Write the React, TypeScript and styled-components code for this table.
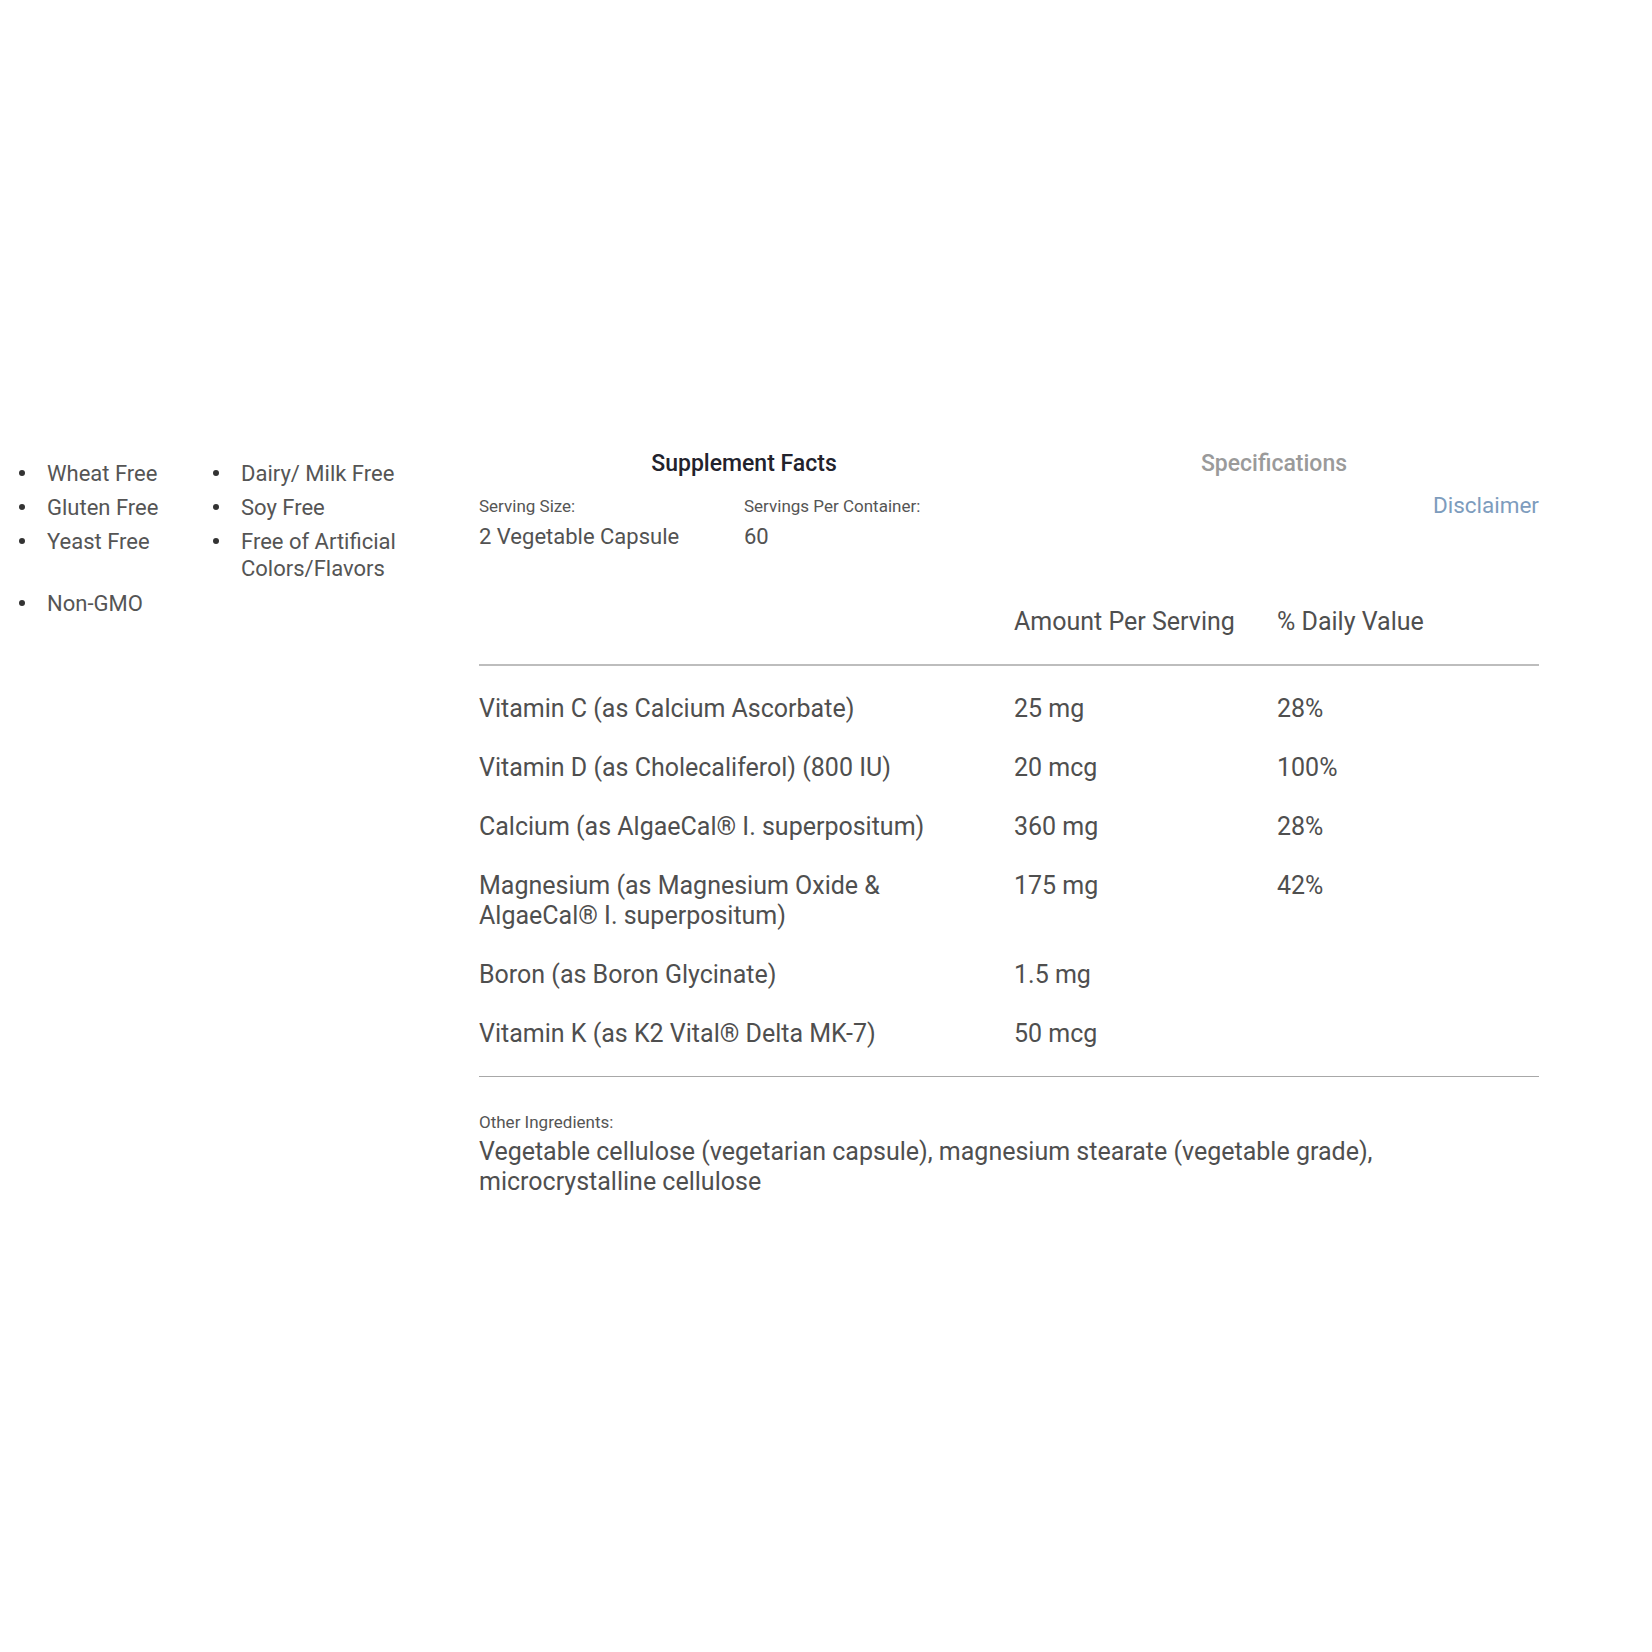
import React from "react";
import styled, { createGlobalStyle } from "styled-components";

const GlobalStyle = createGlobalStyle`
  html, body { margin: 0; padding: 0; background: #ffffff; }
  body { font-family: Roboto, "Noto Sans", "Liberation Sans", sans-serif; color: #4f4f4f; }
  * { box-sizing: border-box; }
`;

const Page = styled.div`
  width: 1652px;
  min-height: 1652px;
  display: flex;
  align-items: flex-start;
  padding-top: 449px;
`;

const FeaturePanel = styled.div`
  flex: 0 0 479px;
  padding: 11px 0 0 19px;
`;

const FeatureList = styled.ul`
  list-style: none;
  margin: 0;
  padding: 0;
  display: grid;
  grid-template-columns: 194px 194px;
  row-gap: 7px;
  align-items: start;
`;

const FeatureItem = styled.li`
  display: grid;
  grid-template-columns: 6px 1fr;
  column-gap: 22px;
  font-size: 22px;
  line-height: 27px;
  color: #555555;

  &:last-child {
    margin-top: 1px;
  }
`;

const Dot = styled.span`
  width: 6px;
  height: 6px;
  border-radius: 50%;
  background: #333333;
  margin-top: 10px;
`;

const FactsPanel = styled.div`
  flex: 0 0 1060px;
  display: flex;
  flex-direction: column;
`;

const Tabs = styled.div`
  display: flex;
`;

const Tab = styled.div<{ $active?: boolean }>`
  flex: 1 1 50%;
  text-align: center;
  font-size: 23px;
  line-height: 30px;
  font-weight: 500;
  color: ${(p) => (p.$active ? "#22222c" : "#9a9a9a")};
`;

const InfoRow = styled.div`
  display: flex;
  align-items: flex-start;
  margin-top: 11px;
`;

const ServingCol = styled.div`
  flex: 0 0 25%;
  padding-top: 6px;
`;

const SmallLabel = styled.div`
  font-size: 17px;
  line-height: 20px;
  color: #555555;
`;

const Value = styled.div`
  font-size: 22px;
  line-height: 30px;
  margin-top: 6px;
  color: #525252;
`;

const Disclaimer = styled.a`
  margin-left: auto;
  font-size: 22.5px;
  line-height: 30px;
  color: #7d9cbd;
  text-decoration: none;
`;

const TableRow = styled.div<{ $header?: boolean }>`
  display: grid;
  grid-template-columns: 535px 263px 1fr;
  align-items: start;
  font-size: 25px;
  line-height: 30px;
  color: #4f4f4f;
  padding: ${(p) => (p.$header ? "0 0 27px" : "14px 0 15px")};
`;

const HeaderBlock = styled.div`
  margin-top: 55px;
  border-bottom: 2px solid #bdbdbd;
`;

const RowsBlock = styled.div`
  padding: 14px 0 12px;
  border-bottom: 1px solid #a8a8a8;
`;

const NameCell = styled.div`
  padding-right: 70px;
`;

const Cell = styled.div``;

const OtherBlock = styled.div`
  padding-top: 35px;
`;

const OtherLabel = styled.div`
  font-size: 17px;
  line-height: 20px;
  color: #555555;
`;

const OtherText = styled.div`
  font-size: 25px;
  line-height: 30px;
  margin-top: 5px;
  color: #4f4f4f;
`;

const features = [
  "Wheat Free",
  "Dairy/ Milk Free",
  "Gluten Free",
  "Soy Free",
  "Yeast Free",
  "Free of Artificial Colors/Flavors",
  "Non-GMO",
];

const rows: [string, string, string][] = [
  ["Vitamin C (as Calcium Ascorbate)", "25 mg", "28%"],
  ["Vitamin D (as Cholecaliferol) (800 IU)", "20 mcg", "100%"],
  ["Calcium (as AlgaeCal® I. superpositum)", "360 mg", "28%"],
  ["Magnesium (as Magnesium Oxide & AlgaeCal® I. superpositum)", "175 mg", "42%"],
  ["Boron (as Boron Glycinate)", "1.5 mg", ""],
  ["Vitamin K (as K2 Vital® Delta MK-7)", "50 mcg", ""],
];

export default function App() {
  return (
    <>
      <GlobalStyle />
      <Page>
        <FeaturePanel>
          <FeatureList>
            {features.map((f) => (
              <FeatureItem key={f}>
                <Dot />
                <span>{f}</span>
              </FeatureItem>
            ))}
          </FeatureList>
        </FeaturePanel>
        <FactsPanel>
          <Tabs>
            <Tab $active>Supplement Facts</Tab>
            <Tab>Specifications</Tab>
          </Tabs>
          <InfoRow>
            <ServingCol>
              <SmallLabel>Serving Size:</SmallLabel>
              <Value>2 Vegetable Capsule</Value>
            </ServingCol>
            <ServingCol>
              <SmallLabel>Servings Per Container:</SmallLabel>
              <Value>60</Value>
            </ServingCol>
            <Disclaimer href="#">Disclaimer</Disclaimer>
          </InfoRow>
          <HeaderBlock>
            <TableRow $header>
              <Cell />
              <Cell>Amount Per Serving</Cell>
              <Cell>% Daily Value</Cell>
            </TableRow>
          </HeaderBlock>
          <RowsBlock>
            {rows.map(([n, a, d]) => (
              <TableRow key={n}>
                <NameCell>{n}</NameCell>
                <Cell>{a}</Cell>
                <Cell>{d}</Cell>
              </TableRow>
            ))}
          </RowsBlock>
          <OtherBlock>
            <OtherLabel>Other Ingredients:</OtherLabel>
            <OtherText>
              Vegetable cellulose (vegetarian capsule), magnesium stearate (vegetable grade), microcrystalline cellulose
            </OtherText>
          </OtherBlock>
        </FactsPanel>
      </Page>
    </>
  );
}
